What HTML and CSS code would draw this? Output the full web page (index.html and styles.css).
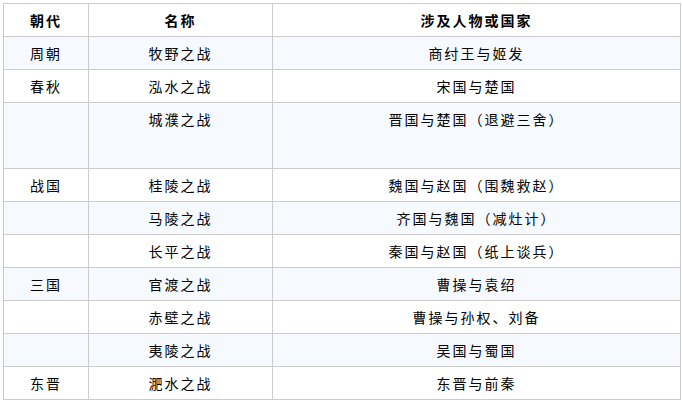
FILE: index.html
```html
<!DOCTYPE html>
<html lang="zh-CN">
<head>
<meta charset="utf-8">
<title>战役</title>
<link rel="stylesheet" href="styles.css">
</head>
<body>
<table class="battles">
  <colgroup>
    <col class="c-dyn">
    <col class="c-name">
    <col class="c-who">
  </colgroup>
  <thead>
    <tr><th>朝代</th><th>名称</th><th>涉及人物或国家</th></tr>
  </thead>
  <tbody>
    <tr class="alt"><td>周朝</td><td>牧野之战</td><td>商纣王与姬发</td></tr>
    <tr><td>春秋</td><td>泓水之战</td><td>宋国与楚国</td></tr>
    <tr class="alt tall"><td></td><td>城濮之战</td><td>晋国与楚国（退避三舍）</td></tr>
    <tr><td>战国</td><td>桂陵之战</td><td>魏国与赵国（围魏救赵）</td></tr>
    <tr class="alt"><td></td><td>马陵之战</td><td>齐国与魏国（减灶计）</td></tr>
    <tr><td></td><td>长平之战</td><td>秦国与赵国（纸上谈兵）</td></tr>
    <tr class="alt"><td>三国</td><td>官渡之战</td><td>曹操与袁绍</td></tr>
    <tr><td></td><td>赤壁之战</td><td>曹操与孙权、刘备</td></tr>
    <tr class="alt"><td></td><td>夷陵之战</td><td>吴国与蜀国</td></tr>
    <tr><td>东晋</td><td>淝水之战</td><td>东晋与前秦</td></tr>
  </tbody>
</table>
</body>
</html>
```
FILE: styles.css
```css
html, body {
  margin: 0;
  padding: 0;
  background: #ffffff;
}
body {
  padding: 3px 0 0 3px;
  font-family: "Noto Sans CJK SC", "Noto Sans", sans-serif;
  font-size: 14px;
  color: #000000;
}
.battles {
  border-collapse: collapse;
  width: 677px;
  table-layout: fixed;
}
.c-dyn { width: 85px; }
.c-name { width: 184px; }
.c-who { width: 408px; }
.battles th,
.battles td {
  border: 1px solid #cccccc;
  padding: 1px 0 0 0;
  height: 31px;
  line-height: 31px;
  text-align: center;
  vertical-align: top;
  letter-spacing: 2px;
  white-space: nowrap;
}
.battles th {
  font-weight: bold;
  height: 30px;
}
.battles tr.alt td {
  background: #f6faff;
}
.battles tr.tall td {
  height: 64px;
}
```
